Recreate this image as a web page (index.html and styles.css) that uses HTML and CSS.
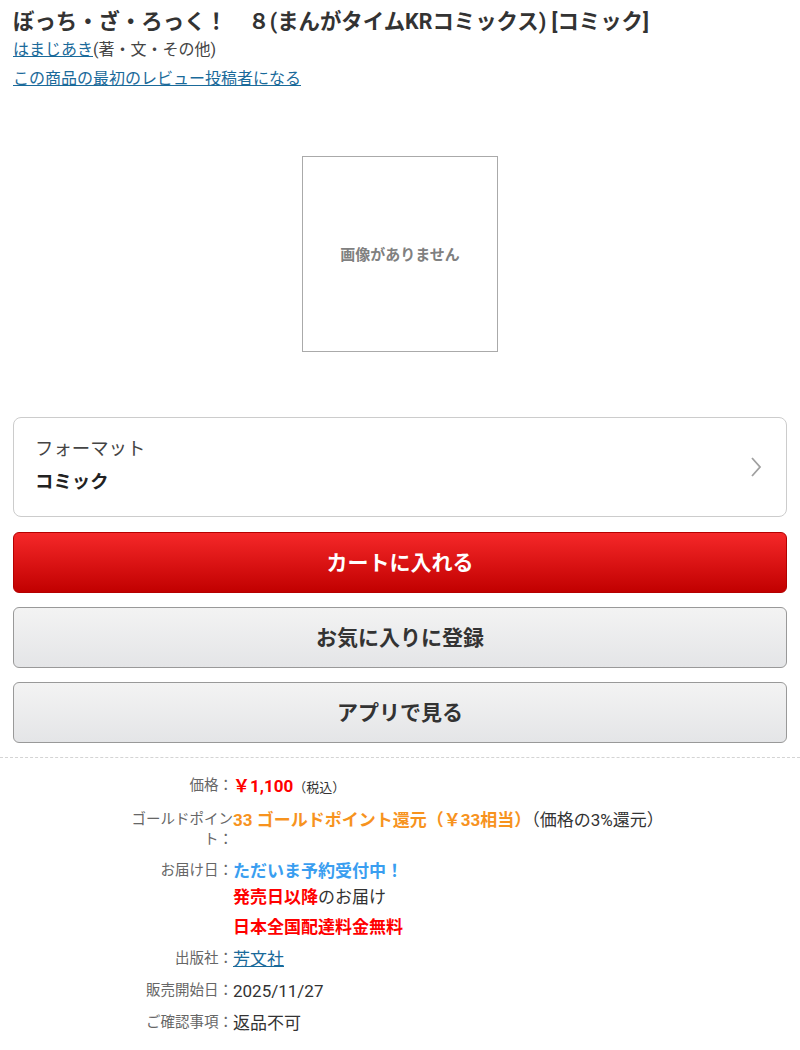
FILE: index.html
```html
<!DOCTYPE html>
<html lang="ja">
<head>
    <meta charset="UTF-8">
    <meta name="viewport" content="width=device-width, initial-scale=1.0">
    <title>ぼっち・ざ・ろっく！ 8</title>
    <link rel="stylesheet" href="styles.css">
</head>
<body>
    <div id="item-container">
        <header class="item-head">
            <h1>ぼっち・ざ・ろっく！　８(まんがタイムKRコミックス) [コミック]</h1>
            <p class="author"><a href="#">はまじあき</a>(著・文・その他)</p>
            <p class="review"><a href="#">この商品の最初のレビュー投稿者になる</a></p>
        </header>

        <div class="item-image">
            <div class="no-image">画像がありません</div>
        </div>

        <div class="format-box">
            <div class="format-text">
                <p class="format-label">フォーマット</p>
                <p class="format-value">コミック</p>
            </div>
            <svg class="chevron" width="12" height="22" viewBox="0 0 12 22">
                <path d="M2 2 L10 11 L2 20" fill="none" stroke="#a0a0a0" stroke-width="1.8"/>
            </svg>
        </div>

        <div class="buttons">
            <button type="button" class="btn btn-cart">カートに入れる</button>
            <button type="button" class="btn btn-gray">お気に入りに登録</button>
            <button type="button" class="btn btn-gray">アプリで見る</button>
        </div>
    </div>

    <dl class="details">
        <div class="row">
            <dt>価格：</dt>
            <dd><span class="price">￥1,100</span><span class="tax">（税込）</span></dd>
        </div>
        <div class="row">
            <dt>ゴールドポイント：</dt>
            <dd><span class="point">33 ゴールドポイント還元（￥33相当）</span>（価格の3%還元）</dd>
        </div>
        <div class="row">
            <dt>お届け日：</dt>
            <dd>
                <p class="blue">ただいま予約受付中！</p>
                <p class="second"><span class="red">発売日以降</span>のお届け</p>
                <p class="red free">日本全国配達料金無料</p>
            </dd>
        </div>
        <div class="row">
            <dt>出版社：</dt>
            <dd><a href="#">芳文社</a></dd>
        </div>
        <div class="row">
            <dt>販売開始日：</dt>
            <dd>2025/11/27</dd>
        </div>
        <div class="row">
            <dt>ご確認事項：</dt>
            <dd>返品不可</dd>
        </div>
    </dl>
</body>
</html>
```

FILE: styles.css
```css
*{
    margin:0;
    padding:0;
    box-sizing:border-box;
    font-family:Roboto, "Noto Sans CJK JP", sans-serif;
}

body{
    background-color:#fff;
    color:#333;
}

a{
    color:#1a6a9a;
}

#item-container{
    padding:7px 13px 0;
}

.item-head h1{
    font-size:21.4px;
    font-weight:bold;
    line-height:30px;
    color:#333;
}

.author{
    font-size:16px;
    line-height:26px;
    color:#444;
}

.review{
    font-size:16px;
    line-height:32px;
}

.item-image{
    display:flex;
    justify-content:center;
    padding:61px 0 65px;
}

.no-image{
    width:196px;
    height:196px;
    border:1px solid #aaa;
    display:flex;
    justify-content:center;
    align-items:center;
    font-size:15px;
    font-weight:bold;
    color:#808080;
    padding-bottom:2px;
}

.format-box{
    display:flex;
    justify-content:space-between;
    align-items:center;
    height:100px;
    border:1px solid #ccc;
    border-radius:8px;
    padding:0 24px 0 21px;
}

.format-label{
    font-size:18.4px;
    line-height:30px;
    color:#444;
}

.format-value{
    font-size:18.4px;
    font-weight:bold;
    line-height:36px;
    color:#222;
}

.buttons{
    display:flex;
    flex-direction:column;
    gap:14px;
    margin-top:15px;
}

.btn{
    height:61px;
    width:100%;
    border-radius:6px;
    font-size:21px;
    font-weight:bold;
    padding-bottom:4px;
    cursor:pointer;
}

.btn-cart{
    background:linear-gradient(#f52829, #c10000);
    border:1px solid #b50000;
    color:#fff;
}

.btn-gray{
    background:linear-gradient(#f3f3f3, #e4e5e7);
    border:1px solid #999;
    color:#333;
}

.details{
    margin-top:14px;
    border-top:1px dashed #d4d4d4;
    padding:17px 0 0 129px;
}

.row{
    display:flex;
    margin-bottom:10px;
}

.row dt{
    width:104px;
    text-align:right;
    font-size:14.5px;
    line-height:20px;
    color:#666;
    padding-top:1px;
}

.row dd{
    font-size:17px;
    line-height:22px;
    color:#333;
}

.row dd .second{
    margin-top:4px;
}

.row dd .free{
    margin-top:8px;
}

.price{
    color:#f00;
    font-weight:bold;
}

.tax{
    font-size:13px;
    color:#333;
}

.point{
    color:#f7931e;
    font-weight:bold;
}

.blue{
    color:#3a9ef0;
    font-weight:bold;
}

.red{
    color:#f00;
    font-weight:bold;
}
```
